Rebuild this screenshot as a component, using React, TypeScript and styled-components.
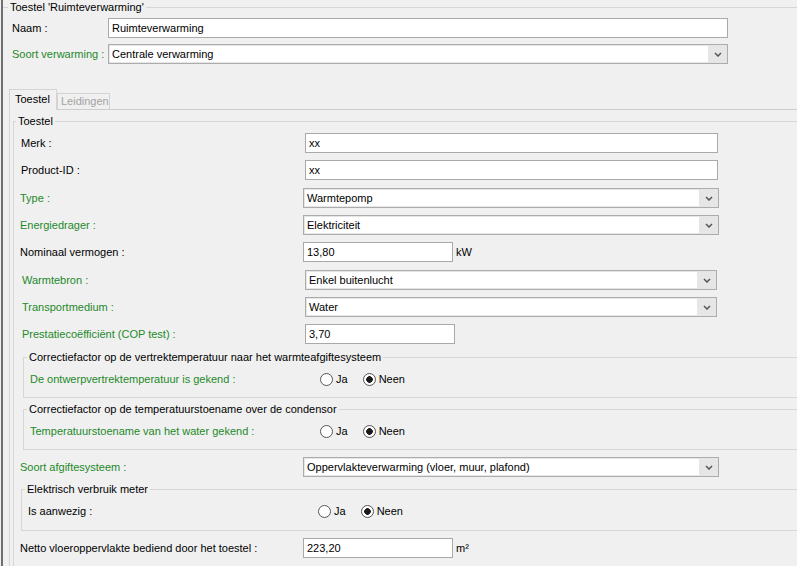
import React from "react";
import styled, { createGlobalStyle } from "styled-components";

const GlobalStyle = createGlobalStyle`
  html, body {
    margin: 0;
    padding: 0;
    background: #f0f0f0;
    overflow: hidden;
  }
  body {
    font-family: "Liberation Sans", Arial, sans-serif;
    font-size: 11px;
    color: #000;
  }
`;

const GREEN = "#23892a";

const Window = styled.div`
  box-sizing: border-box;
  width: 796px;
  height: 566px;
  overflow: hidden;
  margin-left: 1px;
  border-left: 2px solid #6f6f6f;
`;

// group box; the right edge lies outside the window, so no right border is drawn
const Group = styled.fieldset<{ $left?: number; $top?: number; $pt?: number; $pb?: number }>`
  margin: ${(p) => p.$top ?? 0}px 0 0 ${(p) => p.$left ?? 0}px;
  padding: ${(p) => p.$pt ?? 5}px 0 ${(p) => p.$pb ?? 8}px 0;
  border: 1px solid #d6d6d6;
  border-right: none;
  min-width: 0;
`;

const HeadGroup = styled(Group)`
  border-left: none;
  border-bottom: none;
`;

const Legend = styled.legend<{ $indent?: number }>`
  margin-left: ${(p) => p.$indent ?? 3}px;
  padding: 0 2px;
  line-height: 14px;
  color: #000;
`;

const Row = styled.div<{ $pad: number; $mt?: number }>`
  display: flex;
  align-items: center;
  height: 20px;
  padding-left: ${(p) => p.$pad}px;
  margin-top: ${(p) => p.$mt ?? 0}px;
`;

const Label = styled.span<{ $w: number; $green?: boolean }>`
  flex: none;
  width: ${(p) => p.$w}px;
  color: ${(p) => (p.$green ? GREEN : "#000")};
  white-space: nowrap;
`;

const TextBox = styled.div<{ $w: number }>`
  flex: none;
  box-sizing: border-box;
  width: ${(p) => p.$w}px;
  height: 20px;
  border: 1px solid #a9a9a9;
  background: #fff;
  padding: 0 3px;
  display: flex;
  align-items: center;
  white-space: nowrap;
`;

const Combo = styled.div<{ $w: number }>`
  flex: none;
  box-sizing: border-box;
  width: ${(p) => p.$w}px;
  height: 20px;
  border: 1px solid #acacac;
  background: #e6e6e6;
  display: flex;
`;

const ComboText = styled.div`
  flex: 1;
  margin: 1px 0 1px 1px;
  padding-left: 2px;
  background: #fff;
  display: flex;
  align-items: center;
  white-space: nowrap;
`;

const ComboArrow = styled.div`
  width: 19px;
  display: flex;
  align-items: center;
  justify-content: center;
`;

const Unit = styled.span`
  margin-left: 3px;
`;

const Radios = styled.div`
  display: flex;
  align-items: center;
`;

const RadioItem = styled.label`
  display: inline-flex;
  align-items: center;
  gap: 3px;
  margin-right: 15px;
`;

const RadioDot = styled.span<{ $on?: boolean }>`
  box-sizing: border-box;
  width: 13px;
  height: 13px;
  border-radius: 50%;
  border: 1px solid #555;
  background: ${(p) => (p.$on ? "radial-gradient(circle, #1b1b1b 0 3px, #fff 3.6px)" : "#fff")};
`;

const TabStrip = styled.div`
  display: flex;
  align-items: flex-end;
  padding-left: 6px;
  margin-top: 25px;
`;

const Tab = styled.div<{ $active?: boolean; $w: number }>`
  box-sizing: border-box;
  width: ${(p) => p.$w}px;
  height: ${(p) => (p.$active ? 21 : 16)}px;
  margin-bottom: ${(p) => (p.$active ? -1 : 0)}px;
  padding: ${(p) => (p.$active ? "3px 0 0 5px" : "1px 0 0 3px")};
  border: 1px solid #d4d4d4;
  border-bottom: none;
  background: #f0f0f0;
  color: ${(p) => (p.$active ? "#000" : "#a3a3a3")};
  position: relative;
  z-index: ${(p) => (p.$active ? 1 : 0)};
`;

const TabPanel = styled.div`
  margin-left: 6px;
  border-top: 1px solid #cdcdcd;
  border-left: 1px solid #d6d6d6;
  padding: 4px 0 0 3px;
`;

const Chevron = () => (
  <svg width="8" height="5" viewBox="0 0 8 5">
    <polyline points="1,1 4,4 7,1" fill="none" stroke="#555" strokeWidth="1.5" />
  </svg>
);

const Select = ({ w, value }: { w: number; value: string }) => (
  <Combo $w={w}>
    <ComboText>{value}</ComboText>
    <ComboArrow>
      <Chevron />
    </ComboArrow>
  </Combo>
);

const YesNo = () => (
  <Radios>
    <RadioItem>
      <RadioDot />
      Ja
    </RadioItem>
    <RadioItem>
      <RadioDot $on />
      Neen
    </RadioItem>
  </Radios>
);

export default function App() {
  return (
    <>
      <GlobalStyle />
      <Window>
        <HeadGroup $pt={4} $pb={0}>
          <Legend $indent={5}>Toestel 'Ruimteverwarming'</Legend>
          <Row $pad={9}>
            <Label $w={96}>Naam :</Label>
            <TextBox $w={620}>Ruimteverwarming</TextBox>
          </Row>
          <Row $pad={9} $mt={6}>
            <Label $w={96} $green>
              Soort verwarming :
            </Label>
            <Select w={620} value="Centrale verwarming" />
          </Row>
        </HeadGroup>

        <TabStrip>
          <Tab $active $w={48}>
            Toestel
          </Tab>
          <Tab $w={53}>Leidingen</Tab>
        </TabStrip>

        <TabPanel>
          <Group $pt={5} $pb={8}>
            <Legend $indent={2}>Toestel</Legend>

            <Row $pad={7}>
              <Label $w={284}>Merk :</Label>
              <TextBox $w={413}>xx</TextBox>
            </Row>
            <Row $pad={7} $mt={7}>
              <Label $w={284}>Product-ID :</Label>
              <TextBox $w={413}>xx</TextBox>
            </Row>
            <Row $pad={6} $mt={8}>
              <Label $w={283} $green>
                Type :
              </Label>
              <Select w={416} value="Warmtepomp" />
            </Row>
            <Row $pad={6} $mt={7}>
              <Label $w={283} $green>
                Energiedrager :
              </Label>
              <Select w={416} value="Elektriciteit" />
            </Row>
            <Row $pad={6} $mt={7}>
              <Label $w={283}>Nominaal vermogen :</Label>
              <TextBox $w={150}>13,80</TextBox>
              <Unit>kW</Unit>
            </Row>
            <Row $pad={8} $mt={8}>
              <Label $w={283} $green>
                Warmtebron :
              </Label>
              <Select w={412} value="Enkel buitenlucht" />
            </Row>
            <Row $pad={8} $mt={7}>
              <Label $w={283} $green>
                Transportmedium :
              </Label>
              <Select w={412} value="Water" />
            </Row>
            <Row $pad={8} $mt={7}>
              <Label $w={283} $green>
                Prestatiecoëfficiënt (COP test) :
              </Label>
              <TextBox $w={150}>3,70</TextBox>
            </Row>

            <Group $left={9} $top={6}>
              <Legend>Correctiefactor op de vertrektemperatuur naar het warmteafgiftesysteem</Legend>
              <Row $pad={6}>
                <Label $w={290} $green>
                  De ontwerpvertrektemperatuur is gekend :
                </Label>
                <YesNo />
              </Row>
            </Group>

            <Group $left={9} $top={4}>
              <Legend>Correctiefactor op de temperatuurstoename over de condensor</Legend>
              <Row $pad={6}>
                <Label $w={290} $green>
                  Temperatuurstoename van het water gekend :
                </Label>
                <YesNo />
              </Row>
            </Group>

            <Row $pad={6} $mt={7}>
              <Label $w={283} $green>
                Soort afgiftesysteem :
              </Label>
              <Select w={416} value="Oppervlakteverwarming (vloer, muur, plafond)" />
            </Row>

            <Group $left={7} $top={5} $pb={9}>
              <Legend>Elektrisch verbruik meter</Legend>
              <Row $pad={6}>
                <Label $w={290}>Is aanwezig :</Label>
                <YesNo />
              </Row>
            </Group>

            <Row $pad={6} $mt={7}>
              <Label $w={283}>Netto vloeroppervlakte bediend door het toestel :</Label>
              <TextBox $w={150}>223,20</TextBox>
              <Unit>m²</Unit>
            </Row>
          </Group>
        </TabPanel>
      </Window>
    </>
  );
}
